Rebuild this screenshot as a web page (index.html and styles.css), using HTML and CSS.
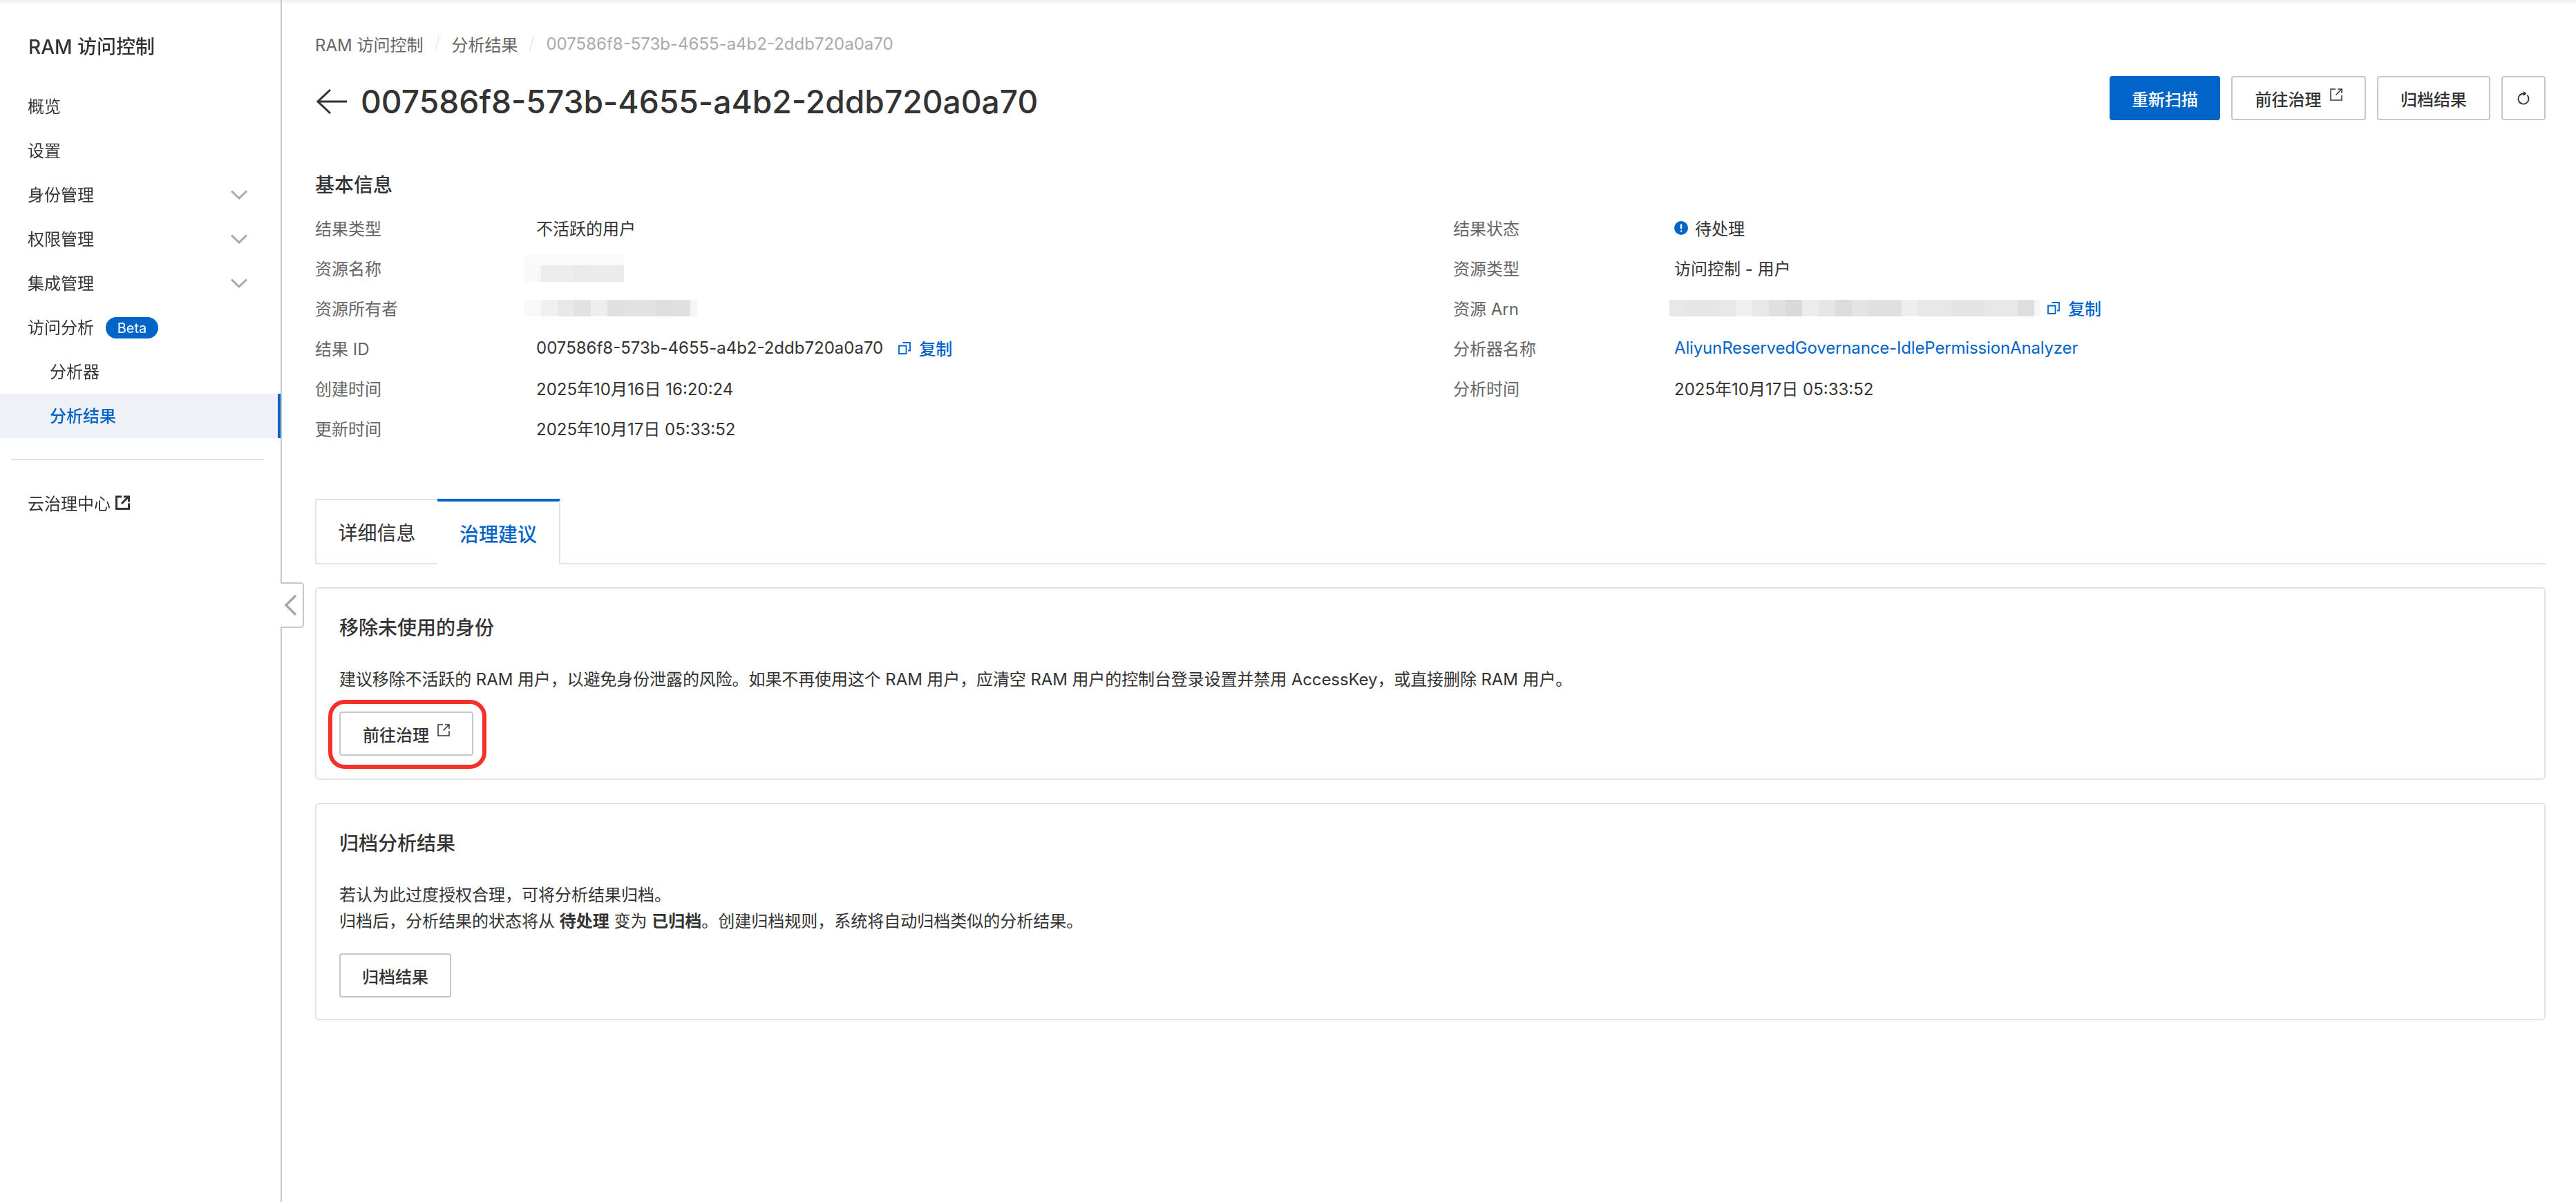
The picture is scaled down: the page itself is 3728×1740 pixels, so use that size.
FILE: index.html
```html
<!DOCTYPE html>
<html lang="zh-CN">
<head>
<meta charset="utf-8">
<title>RAM 访问控制</title>
<link rel="stylesheet" href="styles.css">
</head>
<body>
<div class="top-shade"></div>
<div class="app">
  <aside class="sidebar">
    <div class="side-title">RAM 访问控制</div>
    <nav class="nav">
      <a class="nav-item">概览</a>
      <a class="nav-item">设置</a>
      <a class="nav-item">身份管理<svg class="chev" viewBox="0 0 24 14"><path d="M1 1.500 12 12 23 1.500"/></svg></a>
      <a class="nav-item">权限管理<svg class="chev" viewBox="0 0 24 14"><path d="M1 1.500 12 12 23 1.500"/></svg></a>
      <a class="nav-item">集成管理<svg class="chev" viewBox="0 0 24 14"><path d="M1 1.500 12 12 23 1.500"/></svg></a>
      <a class="nav-item">访问分析<span class="beta">Beta</span></a>
      <a class="nav-item sub">分析器</a>
      <a class="nav-item sub active">分析结果</a>
    </nav>
    <div class="side-divider"></div>
    <a class="nav-item cloud">云治理中心<svg class="ext-bold" viewBox="0 0 21 21"><path d="M9 2H1.500V19.500H19.500V11.500" /><path d="M9 12 18 3M12 2H19.500V9.500"/></svg></a>
    <div class="collapse"><svg viewBox="0 0 20 32"><path d="M17 2 3 16 17 30"/></svg></div>
  </aside>

  <main class="main">
    <div class="crumbs">
      <span>RAM 访问控制</span><i class="sep"></i><span>分析结果</span><i class="sep"></i><span class="crumb-cur">007586f8-573b-4655-a4b2-2ddb720a0a70</span>
    </div>

    <header class="head">
      <div class="head-title">
        <svg class="back" viewBox="0 0 44 36"><path d="M44 18H2M20 1 2 18 20 35"/></svg>
        <h1>007586f8-573b-4655-a4b2-2ddb720a0a70</h1>
      </div>
      <div class="actions">
        <button class="btn primary b-scan">重新扫描</button>
        <button class="btn b-go">前往治理<svg class="ext" viewBox="0 0 18 18"><path d="M8 1H1V17H17V10"/><path d="M8.500 9.500 16.500 1.500M11 1H17V7"/></svg></button>
        <button class="btn b-arch">归档结果</button>
        <button class="btn b-refresh"><svg class="refresh" viewBox="0 0 18 20"><path d="M9 3.500A7.500 7.500 0 1 0 14.300 5.700"/><path class="fill" d="M9 0 13.500 3.500 9 7Z"/></svg></button>
      </div>
    </header>

    <h2 class="section-title">基本信息</h2>
    <section class="info">
      <div class="field"><span class="k">结果类型</span><span class="v">不活跃的用户</span></div>
      <div class="field"><span class="k">结果状态</span><span class="v status"><svg class="dot" viewBox="0 0 20 20"><circle cx="10" cy="10" r="10"/><path d="M10 4.500V11.500M10 13.500V15.500"/></svg>待处理</span></div>

      <div class="field"><span class="k">资源名称</span><span class="mosaic m-name"></span></div>
      <div class="field"><span class="k">资源类型</span><span class="v">访问控制 - 用户</span></div>

      <div class="field"><span class="k">资源所有者</span><span class="mosaic m-owner"></span></div>
      <div class="field"><span class="k">资源 Arn</span><span class="mosaic m-arn"></span><a class="copy"><svg viewBox="0 0 18 18"><path d="M1 5.500H11.500V17H1Z"/><path d="M6.500 1H17V12.500H14"/></svg>复制</a></div>

      <div class="field"><span class="k">结果 ID</span><span class="v">007586f8-573b-4655-a4b2-2ddb720a0a70</span><a class="copy id"><svg viewBox="0 0 18 18"><path d="M1 5.500H11.500V17H1Z"/><path d="M6.500 1H17V12.500H14"/></svg>复制</a></div>
      <div class="field"><span class="k">分析器名称</span><a class="v link">AliyunReservedGovernance-IdlePermissionAnalyzer</a></div>

      <div class="field"><span class="k">创建时间</span><span class="v">2025年10月16日 16:20:24</span></div>
      <div class="field"><span class="k">分析时间</span><span class="v">2025年10月17日 05:33:52</span></div>

      <div class="field"><span class="k">更新时间</span><span class="v">2025年10月17日 05:33:52</span></div>
    </section>

    <div class="tabs">
      <div class="tab">详细信息</div>
      <div class="tab on">治理建议</div>
    </div>

    <section class="card first">
      <h3>移除未使用的身份</h3>
      <p class="tight">建议移除不活跃的 RAM 用户，以避免身份泄露的风险。如果不再使用这个 RAM 用户，应清空 RAM 用户的控制台登录设置并禁用 AccessKey，或直接删除 RAM 用户。</p>
      <div class="card-action">
        <button class="btn b-card-go">前往治理<svg class="ext" viewBox="0 0 18 18"><path d="M8 1H1V17H17V10"/><path d="M8.500 9.500 16.500 1.500M11 1H17V7"/></svg></button>
        <span class="highlight"></span>
      </div>
    </section>

    <section class="card second">
      <h3>归档分析结果</h3>
      <p>若认为此过度授权合理，可将分析结果归档。<br>归档后，分析结果的状态将从 <b>待处理</b> 变为 <b>已归档</b>。创建归档规则，系统将自动归档类似的分析结果。</p>
      <div class="card-action">
        <button class="btn b-card-arch">归档结果</button>
      </div>
    </section>
  </main>
</div>
</body>
</html>
```

FILE: styles.css
```css
* { box-sizing: border-box; }
html, body { margin: 0; height: 100%; background: #fff; }
body {
  font-family: Inter, "Noto Sans CJK SC", sans-serif;
  font-size: 24px;
  color: #333;
  overflow: hidden;
}
.top-shade {
  position: fixed; left: 0; right: 0; top: 0; height: 7px;
  background: linear-gradient(#efefef, #fff);
}
.app { display: flex; height: 1740px; }

/* sidebar */
.sidebar {
  position: relative;
  flex: 0 0 408px;
  border-right: 2px solid #c4c8ce;
  padding-top: 48px;
}
.side-title { font-size: 28px; font-weight: 500; line-height: 40px; padding-left: 41px; margin-bottom: 34px; color: #333; }
.nav { display: flex; flex-direction: column; }
.nav-item {
  display: flex; align-items: center; height: 64px; padding: 0 0 4px 40px;
  font-size: 24px; color: #333; position: relative;
}
.nav-item.sub { padding-left: 72px; }
.nav-item.active { background: #eef1f6; color: #0064c8; font-weight: 500; border-right: 4px solid #0064c8; }
.chev { position: absolute; left: 334px; top: 25px; width: 24px; height: 14px; fill: none; stroke: #a8a8a8; stroke-width: 3; }
.beta {
  display: inline-flex; align-items: center; justify-content: center;
  width: 76px; height: 31px; margin: 5px 0 0 17px; border-radius: 16px;
  background: #0064c8; color: #fff; font-size: 20px;
}
.side-divider { height: 2px; margin: 30px 24px 0 16px; background: #e3e3e3; }
.cloud { margin-top: 31px; }
.ext-bold { width: 21px; height: 21px; margin-left: 7px; fill: none; stroke: #333; stroke-width: 3; }
.collapse {
  position: absolute; left: 406px; top: 843px; width: 34px; height: 66px;
  border: 2px solid #c4c8ce; border-left: 0; border-radius: 0 5px 5px 0;
  background: #fff; display: flex; align-items: center; padding-left: 5px;
}
.collapse svg { width: 20px; height: 32px; fill: none; stroke: #a8a8a8; stroke-width: 3.500; }

/* main */
.main { flex: 1; min-width: 0; padding: 46px 44px 0 48px; }
.crumbs { display: flex; align-items: center; height: 34px; color: #666; white-space: nowrap; }
.sep { width: 1px; height: 24px; margin: 0 20px 0 20px; background: #ddd; transform: rotate(14deg); }
.crumb-cur { color: #aaa; }

.head { display: flex; justify-content: space-between; align-items: flex-start; margin-top: 30px; height: 64px; }
.head-title { display: flex; align-items: center; padding-top: 5px; }
.back { width: 44px; height: 36px; margin-left: 2px; margin-right: 20px; fill: none; stroke: #333; stroke-width: 3; }
h1 { margin: 0; font-size: 46.200px; font-weight: 500; line-height: 64px; color: #333; white-space: nowrap; }
.actions { display: flex; gap: 16px; }

.btn {
  display: inline-flex; align-items: center; justify-content: center;
  height: 64px; padding: 0; border: 2px solid #c4c8ce; border-radius: 4px;
  background: #fff; font: 500 24px Inter, "Noto Sans CJK SC", sans-serif; color: #333;
}
.btn.primary { background: #0064c8; border-color: #0064c8; color: #fff; }
.b-scan { width: 160px; }
.b-go { width: 195px; }
.b-arch { width: 164px; }
.b-refresh { width: 64px; }
.b-card-go { width: 194px; }
.b-card-arch { width: 162px; }
.ext { width: 18px; height: 18px; margin-left: 12px; margin-top: -10px; fill: none; stroke: #333; stroke-width: 1.500; }
.refresh { width: 18px; height: 20px; fill: none; stroke: #333; stroke-width: 1.800; }
.refresh .fill { fill: #333; stroke: none; }

.section-title { margin: 74px 0 0; font-size: 28px; font-weight: 500; line-height: 40px; color: #333; }

.info { display: grid; grid-template-columns: 1647px 1fr; grid-auto-rows: 57.900px; margin-top: 13px; }
.field { display: flex; align-items: center; min-width: 0; white-space: nowrap; }
.k { flex: 0 0 320px; color: #666; }
.v { color: #333; }
.link { color: #0064c8; letter-spacing: -0.150px; }
.status { display: inline-flex; align-items: center; }
.dot { width: 20px; height: 20px; margin-right: 10px; fill: #0064c8; }
.dot path { stroke: #fff; stroke-width: 2.500; fill: none; }
.copy { display: inline-flex; align-items: center; margin-left: 10px; color: #0064c8; font-weight: 500; }
.copy.id { margin-left: 22px; }
.copy svg { width: 18px; height: 18px; margin-right: 12px; fill: none; stroke: #0064c8; stroke-width: 1.800; }

.mosaic { display: block; margin-left: -17px; }
.m-name {
  width: 144px; height: 40px;
  background:
    linear-gradient(90deg, #f9f9f9 0 24px, #ececec 24px 72px, #eaeaea 72px 96px, #ebebeb 96px) 0 16px / 100% 24px no-repeat,
    #fafafa;
  border-radius: 8px 0 0 0;
}
.m-owner {
  width: 250px; height: 24px;
  background: linear-gradient(90deg, #f8f8f8 0 24px, #f0f0f0 24px 48px, #e8e8e8 48px 72px, #e2e2e2 72px 96px, #eeeeee 96px 120px, #e0e0e0 120px 144px, #e2e2e2 144px 192px, #dedede 192px 216px, #e0e0e0 216px 240px, #f6f6f6 240px);
}
.m-arn {
  width: 537px; height: 24px; margin-left: -7px;
  background: linear-gradient(90deg, #e8e8e8 0 24px, #e6e6e6 24px 72px, #e8e8e8 72px 96px, #efefef 96px 120px, #e8e8e8 120px 144px, #e0e0e0 144px 168px, #d9d9d9 168px 192px, #ececec 192px 216px, #e6e6e6 216px 240px, #dcdcdc 240px 264px, #e4e4e4 264px 288px, #e0e0e0 288px 336px, #eeeeee 336px 360px, #e8e8e8 360px 408px, #e4e4e4 408px 456px, #e8e8e8 456px 504px, #dedede 504px 528px, #f6f6f6 528px);
}

.tabs { display: flex; margin-top: 74px; height: 95px; border-bottom: 2px solid #e3e3e3; padding-left: 0; }
.tab {
  display: flex; align-items: center; justify-content: center;
  height: 95px; width: 177px; font-size: 28px; color: #333;
  border: 2px solid #e3e3e3; border-right: 0; background: #fff;
}
.tab.on {
  width: 178px; color: #0064c8; font-weight: 500;
  border-top: 4px solid #0064c8; border-left: 0; border-right: 2px solid #e3e3e3; border-bottom: 0; height: 95px;
}

.card { border: 2px solid #e3e3e3; border-radius: 6px; padding: 0 33px; margin-top: 33px; }
.card.first { height: 279px; }
.card.second { height: 315px; }
.card h3 { margin: 37px 0 0; font-size: 28px; font-weight: 500; line-height: 40px; color: #333; }
.card p { margin: 36px 0 0; line-height: 38px; color: #333; white-space: nowrap; }
.card p.tight { letter-spacing: -0.100px; }
.card b { font-weight: 700; }
.card-action { position: relative; display: inline-flex; margin-top: 27px; }
.highlight {
  position: absolute; left: -16px; top: -17px; width: 229px; height: 100px;
  border: 6px solid #f5302a; border-radius: 24px;
}
```
